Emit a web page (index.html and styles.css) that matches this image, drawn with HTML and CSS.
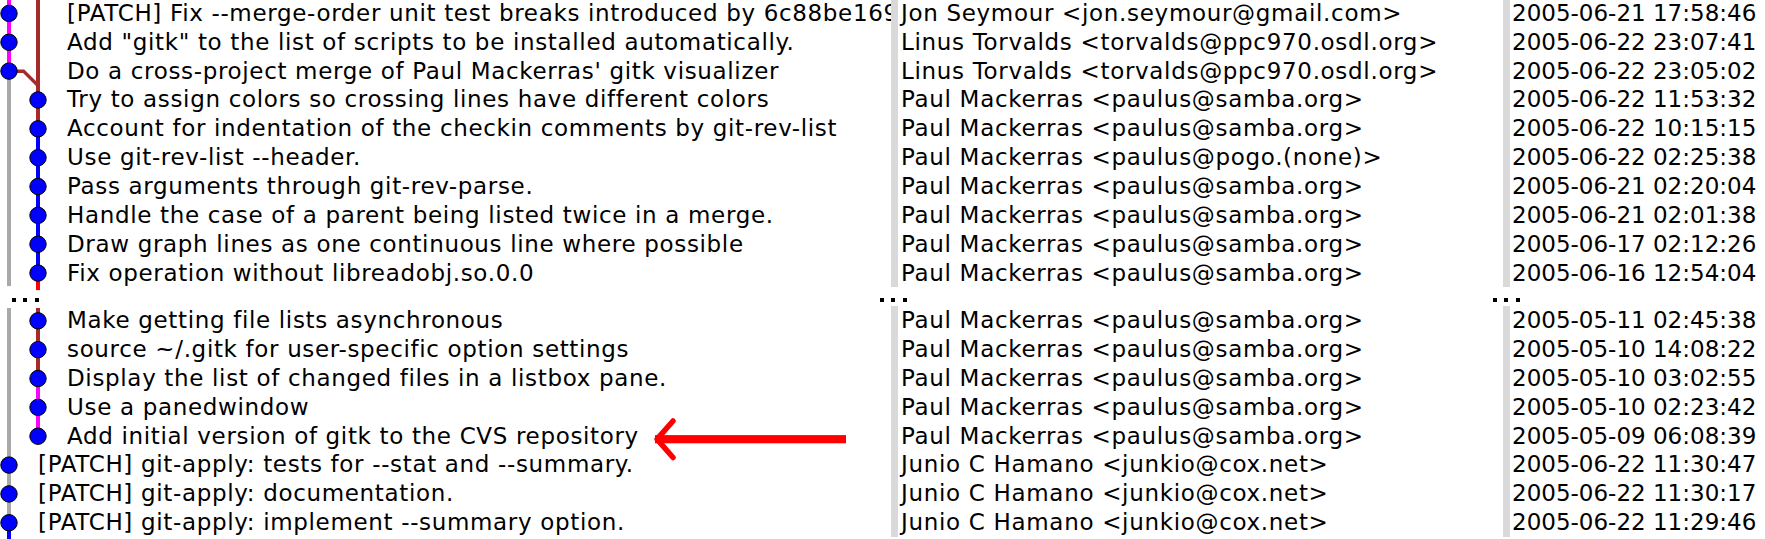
FILE: index.html
```html
<!DOCTYPE html>
<html>
<head>
<meta charset="utf-8">
<link rel="stylesheet" href="styles.css">
</head>
<body>
<div class="log">
  <svg class="graph" width="891" height="545" viewBox="0 0 891 545">
    <g fill="none" stroke-width="4">
      <line x1="9" y1="0" x2="9" y2="72.13" stroke="#ff00ff"/>
      <line x1="9" y1="72.13" x2="9" y2="287.1" stroke="#a9a9a9"/>
      <line x1="9" y1="309" x2="9" y2="523.78" stroke="#a9a9a9"/>
      <line x1="9" y1="523.78" x2="9" y2="545" stroke="#0000ff"/>
      <line x1="38" y1="0" x2="38" y2="129.83" stroke="#a52a2a"/>
      <polyline points="9,72.13 23.5,72.13 38,86.55" stroke="#a52a2a" stroke-width="3.5"/>
      <line x1="38" y1="129.83" x2="38" y2="274.08" stroke="#0000ff"/>
      <line x1="38" y1="274.08" x2="38" y2="291.1" stroke="#ff0000"/>
      <line x1="38" y1="309" x2="38" y2="379.53" stroke="#a52a2a"/>
      <line x1="38" y1="379.53" x2="38" y2="437.23" stroke="#ff00ff"/>
    </g>
    <g fill="#0000ff" stroke="#000" stroke-width="1">
      <circle cx="9" cy="14.43" r="8.2"/>
      <circle cx="9" cy="43.28" r="8.2"/>
      <circle cx="9" cy="72.13" r="8.2"/>
      <circle cx="38" cy="100.98" r="8.2"/>
      <circle cx="38" cy="129.83" r="8.2"/>
      <circle cx="38" cy="158.68" r="8.2"/>
      <circle cx="38" cy="187.53" r="8.2"/>
      <circle cx="38" cy="216.38" r="8.2"/>
      <circle cx="38" cy="245.23" r="8.2"/>
      <circle cx="38" cy="274.08" r="8.2"/>
      <circle cx="38" cy="321.83" r="8.2"/>
      <circle cx="38" cy="350.68" r="8.2"/>
      <circle cx="38" cy="379.53" r="8.2"/>
      <circle cx="38" cy="408.38" r="8.2"/>
      <circle cx="38" cy="437.23" r="8.2"/>
      <circle cx="9" cy="466.08" r="8.2"/>
      <circle cx="9" cy="494.93" r="8.2"/>
      <circle cx="9" cy="523.78" r="8.2"/>
    </g>
    <g class="arrow">
      <rect x="655" y="436.1" width="191" height="8.2" fill="#ff0000"/>
      <polyline points="673,422 657,440.1 673,458.5" fill="none" stroke="#ff0000" stroke-width="5.5" stroke-linecap="round" stroke-linejoin="round"/>
    </g>
  </svg>

  <div class="row"><div class="head">[PATCH] Fix --merge-order unit test breaks introduced by 6c88be169866c61ac51c9ef2cbd1a9db3a3e4c9d</div><div class="author">Jon Seymour &lt;jon.seymour@gmail.com&gt;</div><div class="date">2005-06-21 17:58:46</div></div>
  <div class="row"><div class="head">Add "gitk" to the list of scripts to be installed automatically.</div><div class="author">Linus Torvalds &lt;torvalds@ppc970.osdl.org&gt;</div><div class="date">2005-06-22 23:07:41</div></div>
  <div class="row"><div class="head">Do a cross-project merge of Paul Mackerras' gitk visualizer</div><div class="author">Linus Torvalds &lt;torvalds@ppc970.osdl.org&gt;</div><div class="date">2005-06-22 23:05:02</div></div>
  <div class="row"><div class="head">Try to assign colors so crossing lines have different colors</div><div class="author">Paul Mackerras &lt;paulus@samba.org&gt;</div><div class="date">2005-06-22 11:53:32</div></div>
  <div class="row"><div class="head">Account for indentation of the checkin comments by git-rev-list</div><div class="author">Paul Mackerras &lt;paulus@samba.org&gt;</div><div class="date">2005-06-22 10:15:15</div></div>
  <div class="row"><div class="head">Use git-rev-list --header.</div><div class="author">Paul Mackerras &lt;paulus@pogo.(none)&gt;</div><div class="date">2005-06-22 02:25:38</div></div>
  <div class="row"><div class="head">Pass arguments through git-rev-parse.</div><div class="author">Paul Mackerras &lt;paulus@samba.org&gt;</div><div class="date">2005-06-21 02:20:04</div></div>
  <div class="row"><div class="head">Handle the case of a parent being listed twice in a merge.</div><div class="author">Paul Mackerras &lt;paulus@samba.org&gt;</div><div class="date">2005-06-21 02:01:38</div></div>
  <div class="row"><div class="head">Draw graph lines as one continuous line where possible</div><div class="author">Paul Mackerras &lt;paulus@samba.org&gt;</div><div class="date">2005-06-17 02:12:26</div></div>
  <div class="row"><div class="head">Fix operation without libreadobj.so.0.0</div><div class="author">Paul Mackerras &lt;paulus@samba.org&gt;</div><div class="date">2005-06-16 12:54:04</div></div>

  <div class="row gap">
    <div class="cell-gap graph-gap"><span class="dots"><i></i><i></i><i></i></span></div>
    <div class="cell-gap author-gap"><span class="dots"><i></i><i></i><i></i></span></div>
    <div class="cell-gap date-gap"><span class="dots"><i></i><i></i><i></i></span></div>
  </div>

  <div class="row"><div class="head">Make getting file lists asynchronous</div><div class="author">Paul Mackerras &lt;paulus@samba.org&gt;</div><div class="date">2005-05-11 02:45:38</div></div>
  <div class="row"><div class="head">source ~/.gitk for user-specific option settings</div><div class="author">Paul Mackerras &lt;paulus@samba.org&gt;</div><div class="date">2005-05-10 14:08:22</div></div>
  <div class="row"><div class="head">Display the list of changed files in a listbox pane.</div><div class="author">Paul Mackerras &lt;paulus@samba.org&gt;</div><div class="date">2005-05-10 03:02:55</div></div>
  <div class="row"><div class="head">Use a panedwindow</div><div class="author">Paul Mackerras &lt;paulus@samba.org&gt;</div><div class="date">2005-05-10 02:23:42</div></div>
  <div class="row"><div class="head">Add initial version of gitk to the CVS repository</div><div class="author">Paul Mackerras &lt;paulus@samba.org&gt;</div><div class="date">2005-05-09 06:08:39</div></div>
  <div class="row one-lane"><div class="head">[PATCH] git-apply: tests for --stat and --summary.</div><div class="author">Junio C Hamano &lt;junkio@cox.net&gt;</div><div class="date">2005-06-22 11:30:47</div></div>
  <div class="row one-lane"><div class="head">[PATCH] git-apply: documentation.</div><div class="author">Junio C Hamano &lt;junkio@cox.net&gt;</div><div class="date">2005-06-22 11:30:17</div></div>
  <div class="row one-lane"><div class="head">[PATCH] git-apply: implement --summary option.</div><div class="author">Junio C Hamano &lt;junkio@cox.net&gt;</div><div class="date">2005-06-22 11:29:46</div></div>
</div>
</body>
</html>
```
FILE: styles.css
```css
html, body {
  margin: 0;
  padding: 0;
  background: #ffffff;
  overflow: hidden;
}

body {
  font-family: "DejaVu Sans", "Liberation Sans", sans-serif;
  font-size: 23px;
  color: #000000;
  width: 1765px;
  height: 539px;
}

.log {
  position: relative;
  margin-top: -1.1px;
}

.graph {
  position: absolute;
  left: 0;
  top: 0;
  z-index: 1;
  pointer-events: none;
}

.row {
  display: grid;
  grid-template-columns: 891px 612px 262px;
  height: 28.85px;
  line-height: 28.85px;
  white-space: nowrap;
}

.head {
  overflow: hidden;
  padding-left: 67px;
  letter-spacing: 0.66px;
}

.row.one-lane .head {
  padding-left: 38px;
}

.author {
  overflow: hidden;
  border-left: 7px solid #d9d9d9;
  padding-left: 3px;
  letter-spacing: 0.68px;
}

.date {
  overflow: hidden;
  border-left: 7px solid #d9d9d9;
  padding-left: 2px;
}

.row.gap {
  height: 18.9px;
  line-height: normal;
}

.cell-gap {
  display: flex;
  align-items: flex-start;
  padding-top: 11px;
}

.graph-gap {
  padding-left: 12px;
}

.author-gap {
  margin-left: -11px;
}

.date-gap {
  margin-left: -10px;
}

.dots {
  display: flex;
  gap: 7.3px;
}

.dots i {
  display: block;
  width: 4px;
  height: 4px;
  background: #000000;
}
```
